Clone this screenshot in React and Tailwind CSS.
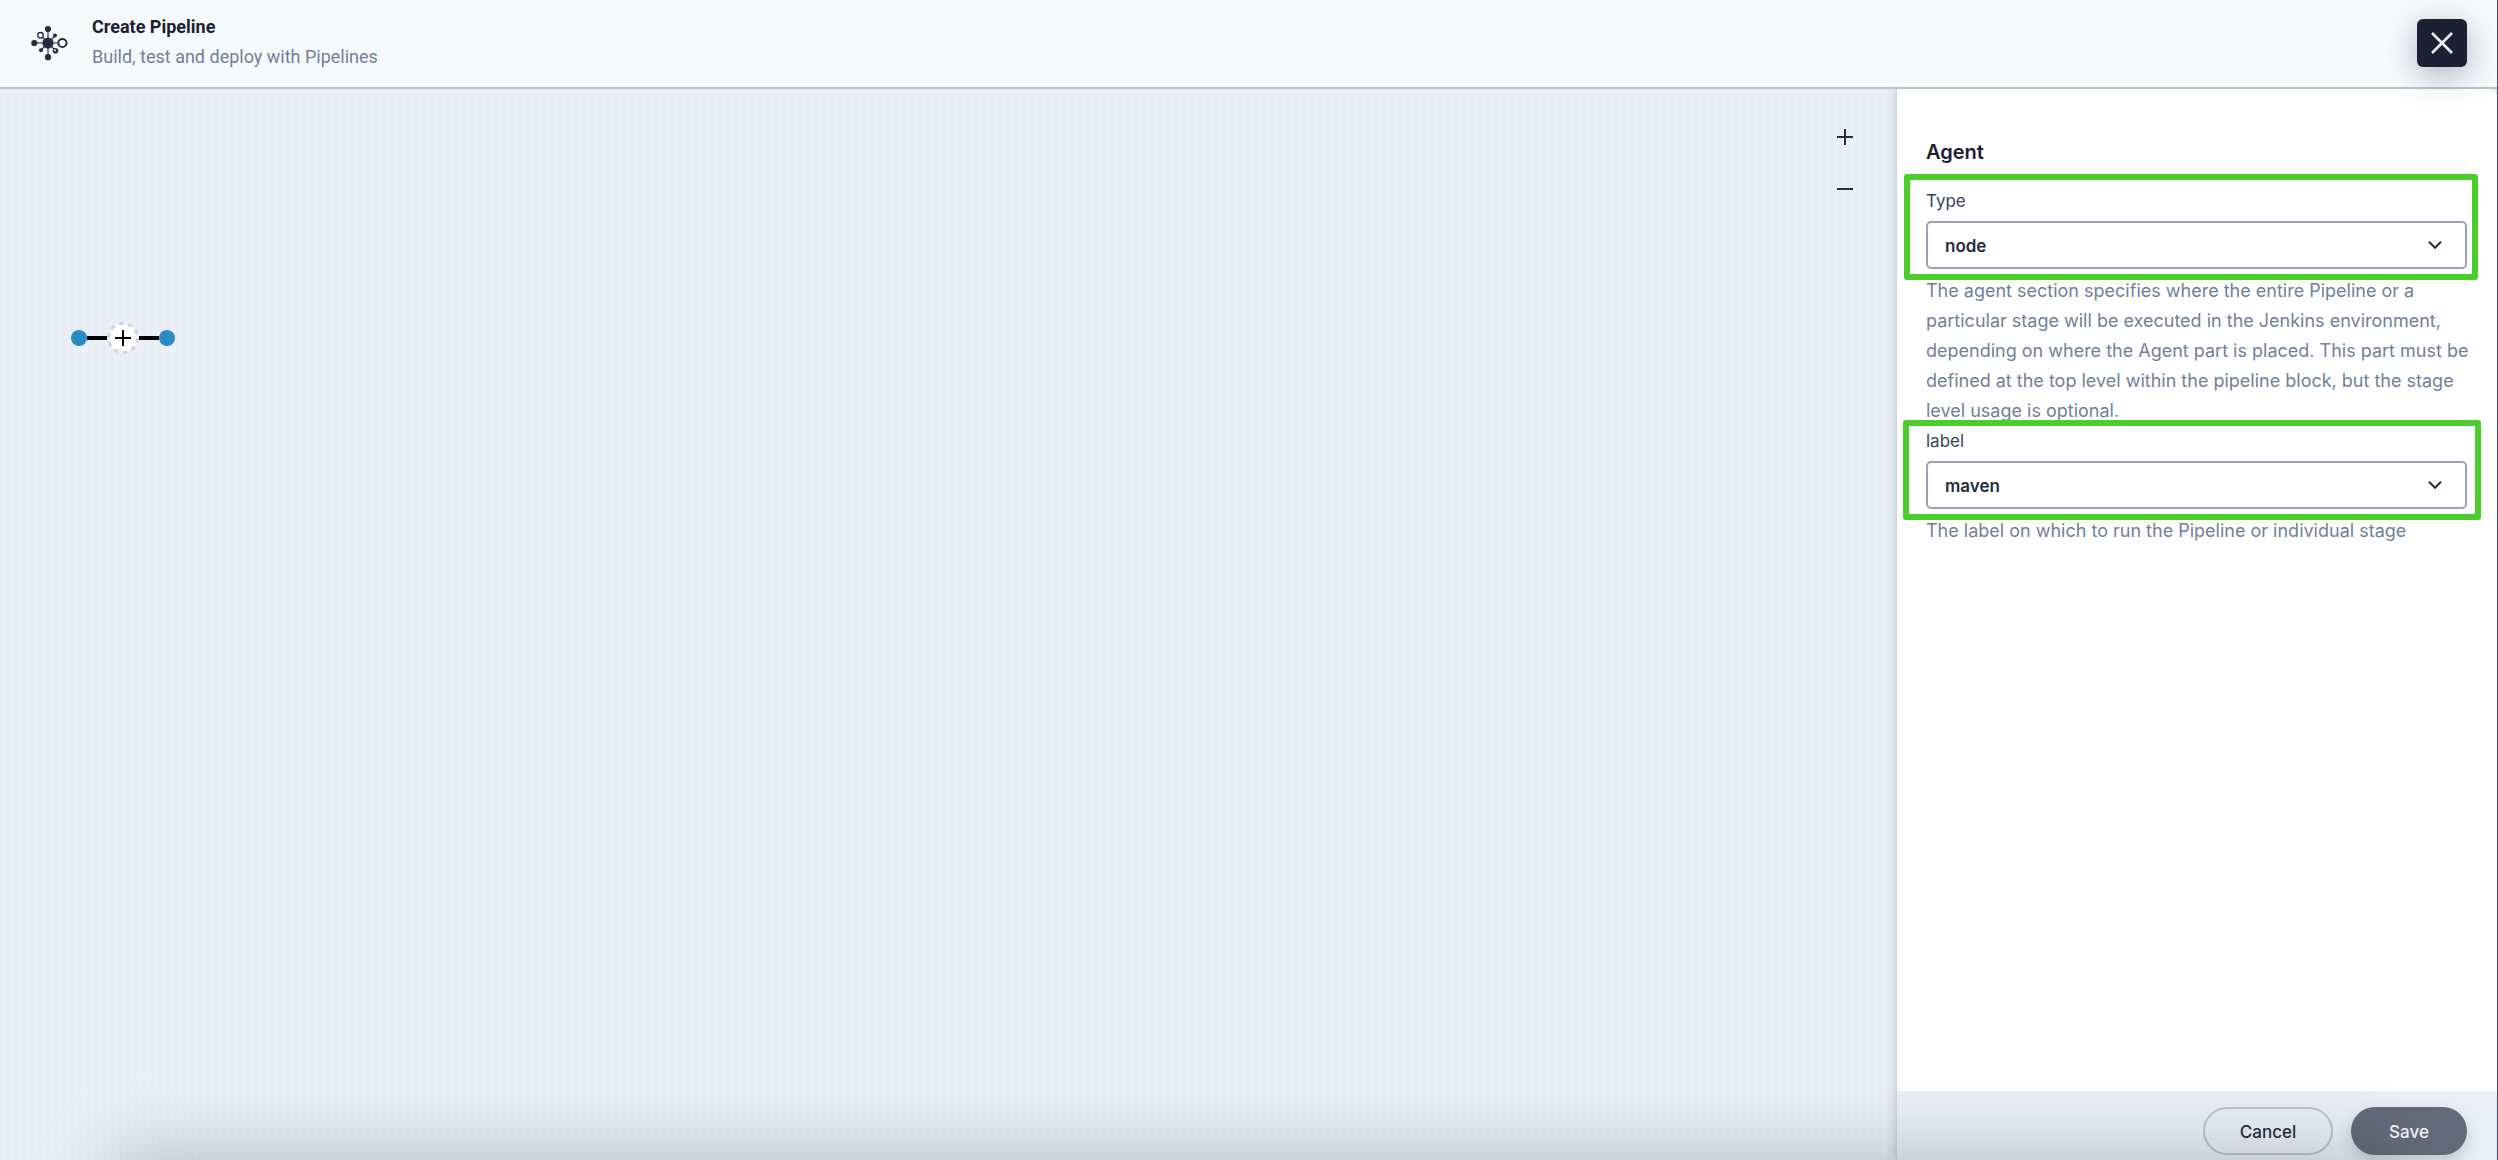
import { useState } from "react";

const PipelineLogo = () => (
  <svg viewBox="0 0 40 40" className="h-10 w-10 text-[#242e42]" fill="currentColor" stroke="currentColor" aria-hidden="true">
    <path d="M20 6v28M7 20h24M13 13l14 14M13 27l14-14" fill="none" strokeWidth="1.1" />
    <circle cx="20" cy="20" r="5.6" stroke="none" />
    <circle cx="20" cy="6" r="3.1" stroke="none" />
    <circle cx="20" cy="34.2" r="3.1" stroke="none" />
    <circle cx="6.3" cy="20" r="3.1" stroke="none" />
    <circle cx="27" cy="12.5" r="2" stroke="none" />
    <circle cx="13" cy="27.2" r="2" stroke="none" />
    <circle cx="12.5" cy="12.3" r="2.8" fill="#f7fafd" strokeWidth="1.3" />
    <circle cx="34.4" cy="20" r="4.1" fill="#f7fafd" strokeWidth="2" />
    <circle cx="27.5" cy="27.8" r="2.8" stroke="none" />
    <circle cx="27" cy="27.2" r="1" fill="#f7fafd" stroke="none" />
  </svg>
);

const Chevron = () => (
  <svg viewBox="0 0 14 8" className="pointer-events-none absolute right-[25px] h-2 w-[14px]" fill="none" stroke="#242e42" strokeWidth="2" aria-hidden="true">
    <path d="M1 .8l6 6 6-6" />
  </svg>
);

const Field = ({ id, label, options, help, frame }) => {
  const [value, setValue] = useState(options[0]);

  return (
    <div className="relative">
      <label htmlFor={id} className="block text-[17px] leading-[30px] text-[#36435c]">
        {label}
      </label>
      <div className="relative mt-[5px] flex items-center">
        <select
          id={id}
          value={value}
          onChange={(e) => setValue(e.target.value)}
          className="h-12 w-full appearance-none rounded-[5px] border-2 border-[#99a3b1] bg-white px-[17px] pt-1 text-[17px] font-semibold text-[#242e42]"
        >
          {options.map((option) => (
            <option key={option}>{option}</option>
          ))}
        </select>
        <Chevron />
      </div>
      <p className="mt-[7px] text-lg leading-[30px] whitespace-pre text-[#718098]">{help}</p>
      {/* Highlight frame round the label and its select */}
      <div className={`pointer-events-none absolute rounded-[3px] border-[6px] border-[#4bce2c] ${frame}`} />
    </div>
  );
};

const agentHelp = `The agent section specifies where the entire Pipeline or a
particular stage will be executed in the Jenkins environment,
depending on where the Agent part is placed. This part must be
defined at the top level within the pipeline block, but the stage
level usage is optional.`;

export default function App() {
  return (
    <div className="relative flex h-screen flex-col overflow-hidden border-r border-[#48505f] bg-[#ebf0f8] font-['Inter',sans-serif]">
      <header className="relative z-10 flex h-[89px] shrink-0 items-center border-b-2 border-[#b9c4d0] bg-[#f7fafd] pr-[30px] pb-px pl-7 font-['Roboto',sans-serif]">
        <PipelineLogo />
        <div className="ml-6 pb-0.5 text-lg leading-[30px]">
          <h1 className="font-bold text-[#1b2132]">Create Pipeline</h1>
          <p className="text-[#718098]">Build, test and deploy with Pipelines</p>
        </div>
        <button
          type="button"
          aria-label="Close"
          className="ml-auto flex h-12 w-[50px] items-center justify-center rounded-md bg-[#1b2132] shadow-[0_8px_32px_rgba(36,46,66,0.35)]"
        >
          <svg viewBox="0 0 22 22" className="h-[22px] w-[22px]" stroke="#eeeeee" strokeWidth="2.6" aria-hidden="true">
            <path d="M1 1l20 20M21 1L1 21" />
          </svg>
        </button>
      </header>

      <div className="flex min-h-0 flex-1">
        {/* Canvas */}
        <main className="relative flex-1 bg-[linear-gradient(#e7ecf4_1px,transparent_1px),linear-gradient(90deg,#e7ecf4_1px,transparent_1px)] bg-size-[8px_8px]">
          <div className="absolute top-[233px] left-[71px] flex items-center">
            <span className="h-4 w-4 rounded-full bg-[#298bc3]" />
            <span className="h-1 w-5 bg-black" />
            <button type="button" aria-label="Add stage" className="h-8 w-8">
              <svg viewBox="0 0 32 32" className="h-8 w-8" fill="none" aria-hidden="true">
                <circle cx="16" cy="16" r="14.5" fill="#fff" stroke="#ccd3db" strokeWidth="3" strokeDasharray="4.6 4.5" />
                <path d="M16 8v16M8 16h16" stroke="#000" strokeWidth="2" />
              </svg>
            </button>
            <span className="h-1 w-5 bg-black" />
            <span className="h-4 w-4 rounded-full bg-[#298bc3]" />
          </div>

          <div className="absolute top-10 right-11 flex flex-col gap-9 text-[#242e42]">
            <button type="button" aria-label="Zoom in">
              <svg viewBox="0 0 16 16" className="h-4 w-4" stroke="currentColor" strokeWidth="2" aria-hidden="true">
                <path d="M8 0v16M0 8h16" />
              </svg>
            </button>
            <button type="button" aria-label="Zoom out">
              <svg viewBox="0 0 16 16" className="h-4 w-4" stroke="currentColor" strokeWidth="2" aria-hidden="true">
                <path d="M0 8h16" />
              </svg>
            </button>
          </div>
        </main>

        {/* Properties */}
        <aside className="relative flex w-[600px] shrink-0 flex-col rounded-tr-lg bg-white shadow-[-2px_0_8px_rgba(36,46,66,0.2)]">
          <form id="agent-form" className="flex-1 pt-12 pr-[30px] pl-[29px]">
            <h2 className="mb-[19px] text-xl leading-[30px] font-semibold text-[#1b2132]">Agent</h2>
            <Field
              id="agent-type"
              label="Type"
              options={["node", "any", "kubernetes", "none"]}
              help={agentHelp}
              frame="-top-3 -right-[11px] -left-[22px] h-[106px]"
            />
            <Field
              id="agent-label"
              label="label"
              options={["maven", "base", "nodejs", "go"]}
              help="The label on which to run the Pipeline or individual stage"
              frame="-top-1.5 -right-[14px] -left-[23px] h-[100px]"
            />
          </form>
          <footer className="flex justify-end gap-[18px] bg-[#eaeff7] px-[30px] pt-4 pb-[5px] text-[17px] font-medium">
            <button type="button" className="h-12 w-[130px] rounded-full border-2 border-[#bcc4d0] pt-1 text-[#242e42]">
              Cancel
            </button>
            <button type="submit" form="agent-form" className="h-12 w-[116px] rounded-full bg-[#636a79] pt-1 text-gray-100 shadow-[0_8px_16px_rgba(36,46,66,0.2)]">
              Save
            </button>
          </footer>
        </aside>
      </div>

      {/* Shade cast from below the window */}
      <div className="pointer-events-none absolute top-full right-[110px] left-[110px] h-40 shadow-[0_0_80px_rgba(0,0,0,0.25)]" />
    </div>
  );
}
